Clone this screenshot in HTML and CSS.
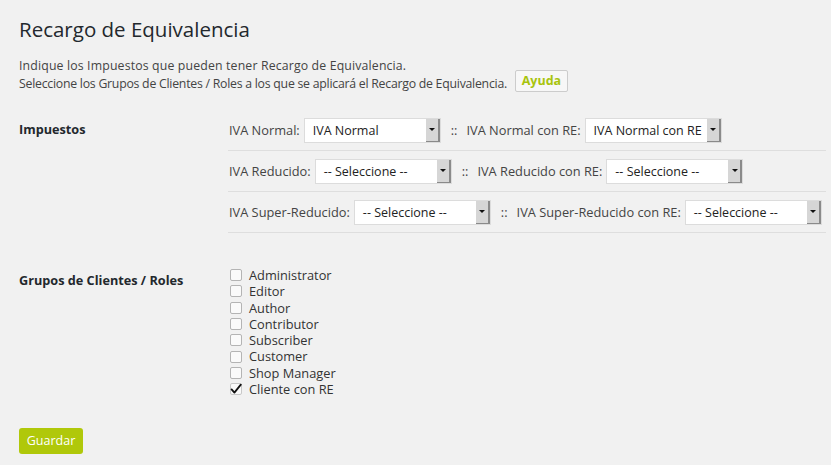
FILE: index.html
```html
<!DOCTYPE html>
<html lang="es">
<head>
<meta charset="utf-8">
<title>Recargo de Equivalencia</title>
<link rel="stylesheet" href="styles.css">
</head>
<body>
<div class="wrap">
  <h1 class="title">Recargo de Equivalencia</h1>
  <div class="intro">
    <div class="intro-line">Indique los Impuestos que pueden tener Recargo de Equivalencia.</div>
    <div class="intro-row">
      <span class="intro-text">Seleccione los Grupos de Clientes / Roles a los que se aplicará el Recargo de Equivalencia.</span>
      <button class="btn-help" type="button">Ayuda</button>
    </div>
  </div>

  <div class="form">
    <div class="th th-taxes">Impuestos</div>
    <div class="td taxes">
      <div class="tax-row">
        <span class="lbl">IVA Normal:</span>
        <span class="sel"><span class="sel-val">IVA Normal</span><span class="sel-btn"><span class="tri"></span></span></span>
        <span class="sep">::</span>
        <span class="lbl">IVA Normal con RE:</span>
        <span class="sel"><span class="sel-val">IVA Normal con RE</span><span class="sel-btn"><span class="tri"></span></span></span>
      </div>
      <div class="tax-row">
        <span class="lbl">IVA Reducido:</span>
        <span class="sel"><span class="sel-val">-- Seleccione --</span><span class="sel-btn"><span class="tri"></span></span></span>
        <span class="sep">::</span>
        <span class="lbl">IVA Reducido con RE:</span>
        <span class="sel"><span class="sel-val">-- Seleccione --</span><span class="sel-btn"><span class="tri"></span></span></span>
      </div>
      <div class="tax-row">
        <span class="lbl">IVA Super-Reducido:</span>
        <span class="sel"><span class="sel-val">-- Seleccione --</span><span class="sel-btn"><span class="tri"></span></span></span>
        <span class="sep">::</span>
        <span class="lbl">IVA Super-Reducido con RE:</span>
        <span class="sel"><span class="sel-val">-- Seleccione --</span><span class="sel-btn"><span class="tri"></span></span></span>
      </div>
    </div>

    <div class="th th-roles">Grupos de Clientes / Roles</div>
    <div class="td roles">
      <label class="role"><span class="box"></span>Administrator</label>
      <label class="role"><span class="box"></span>Editor</label>
      <label class="role"><span class="box"></span>Author</label>
      <label class="role"><span class="box"></span>Contributor</label>
      <label class="role"><span class="box"></span>Subscriber</label>
      <label class="role"><span class="box"></span>Customer</label>
      <label class="role"><span class="box"></span>Shop Manager</label>
      <label class="role"><span class="box checked"><svg viewBox="0 0 12 12" width="12" height="12"><path d="M1.6 6.4 L4.4 9.6 L10.8 1.6" fill="none" stroke="#111" stroke-width="1.8" stroke-linecap="round" stroke-linejoin="round"/></svg></span>Cliente con RE</label>
    </div>
  </div>

  <button class="btn-save" type="button">Guardar</button>
</div>
</body>
</html>
```

FILE: styles.css
```css
html, body {
  margin: 0;
  padding: 0;
  background: #f1f1f1;
}
body {
  font-family: "Open Sans", "Noto Sans", "DejaVu Sans", sans-serif;
  font-size: 12.3px;
  color: #444;
}
.wrap {
  padding: 0 5px 0 19px;
}
.title {
  margin: 14px 0 0;
  font-size: 20.5px;
  font-weight: 400;
  line-height: 30px;
  color: #23282d;
}
.intro {
  margin-top: 13px;
  line-height: 17px;
}
.intro-line {
  height: 17px;
  letter-spacing: 0.15px;
}
.intro-row {
  display: flex;
  align-items: center;
  gap: 8px;
  margin-top: -4px;
}
.intro-text {
  line-height: 17px;
  padding-top: 4px;
  letter-spacing: -0.25px;
}
.btn-help {
  height: 22px;
  width: 53px;
  padding: 0;
  border: 1px solid #ccc;
  border-radius: 2px;
  background: #f7f7f7;
  color: #a8c40e;
  font-family: inherit;
  font-size: 12.5px;
  font-weight: 700;
  line-height: 20px;
}
.form {
  display: grid;
  grid-template-columns: 209px 1fr;
  margin-top: 18px;
}
.th {
  font-weight: 700;
  font-size: 12.7px;
  color: #23282d;
  line-height: 17px;
}
.th-taxes {
  padding-top: 11px;
}
.th-roles {
  padding-top: 39px;
}
.tax-row {
  display: flex;
  align-items: center;
  height: 40px;
  border-bottom: 1px solid #dedede;
  padding-left: 1px;
  font-size: 12.8px;
}
.lbl {
  margin-right: 4px;
  white-space: nowrap;
}
.sep {
  margin: 0 9px 0 10px;
}
.sel {
  display: inline-flex;
  width: 137px;
  height: 25px;
  box-sizing: border-box;
  border: 1px solid #dcdcdc;
  background: #fff;
  flex: none;
}
.sel-val {
  flex: 1;
  padding-left: 8px;
  font-size: 12.5px;
  line-height: 23px;
  color: #222;
  white-space: nowrap;
  overflow: hidden;
}
.sel-btn {
  width: 14px;
  box-sizing: border-box;
  background: #d6d6d6;
  border-right: 2px solid #8a8a8a;
  border-bottom: 1px solid #8a8a8a;
  display: flex;
  align-items: center;
  justify-content: center;
  flex: none;
}
.tri {
  width: 0;
  height: 0;
  border-left: 3px solid transparent;
  border-right: 3px solid transparent;
  border-top: 3px solid #111;
  margin-left: 1px;
}
.roles {
  padding-top: 34px;
  padding-left: 2px;
}
.role {
  display: flex;
  align-items: center;
  height: 16.3px;
  line-height: 16.3px;
  color: #333;
  font-size: 12.8px;
}
.box {
  width: 12px;
  height: 12px;
  box-sizing: border-box;
  border: 1px solid #b4b4b4;
  border-radius: 2px;
  background: #fafafa;
  margin-right: 7px;
  flex: none;
}
.box.checked {
  border-color: #c8c8c8;
}
.box svg {
  display: block;
  margin: -1px;
}
.btn-save {
  display: block;
  margin-top: 31px;
  width: 64px;
  height: 26px;
  padding: 0;
  border: 0;
  border-radius: 3px;
  background: #b0c80a;
  color: #fff;
  font-family: inherit;
  font-size: 12.5px;
  line-height: 26px;
}
```
